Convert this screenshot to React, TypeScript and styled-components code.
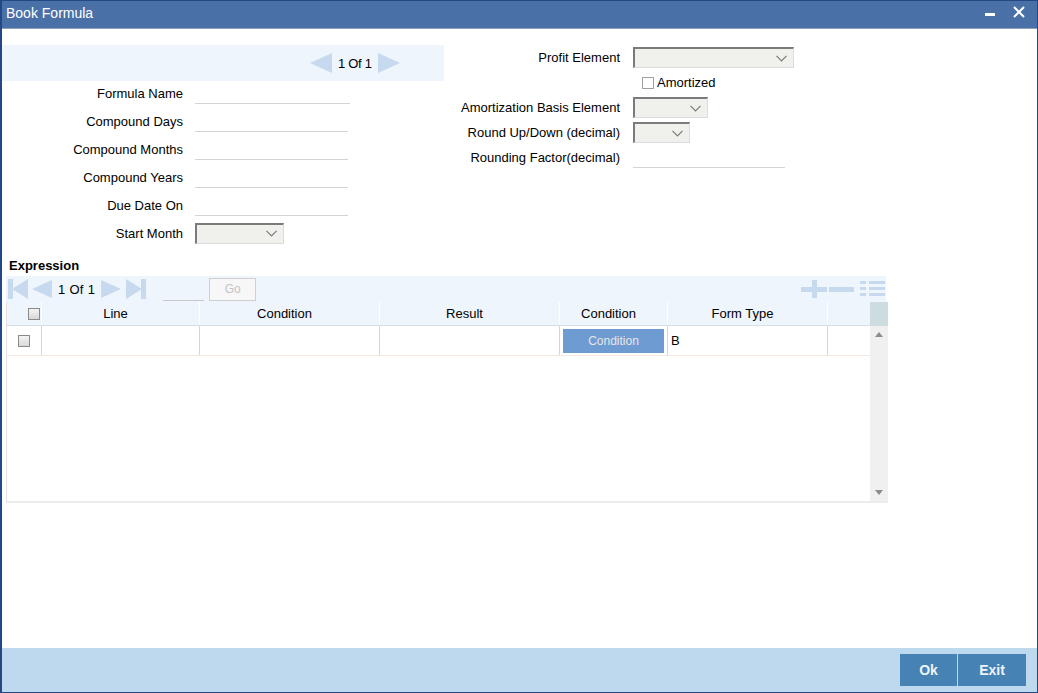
import React from "react";
import styled, { createGlobalStyle } from "styled-components";

const GlobalStyle = createGlobalStyle`
  html, body {
    margin: 0;
    padding: 0;
    overflow: hidden;
  }
  body {
    font-family: "Liberation Sans", Arial, sans-serif;
    font-size: 13px;
    color: #000;
  }
`;

const Window = styled.div`
  width: 1038px;
  height: 693px;
  box-sizing: border-box;
  border: 1px solid #234884;
  border-left-width: 2px;
  display: flex;
  flex-direction: column;
  background: #fff;
`;

const TitleBar = styled.div`
  height: 27px;
  flex: none;
  background: #4a70a8;
  border-bottom: 1px solid #8fa3b8;
  display: flex;
  align-items: center;
  padding: 0 12px 0 4px;
  color: #fff;
  font-size: 14px;
`;

const Title = styled.div`
  flex: 1;
  margin-top: -3px;
`;

const WinButtons = styled.div`
  display: flex;
  align-items: center;
  gap: 18px;
  margin-top: -6px;
`;

const Body = styled.div`
  flex: 1;
  padding-top: 16px;
  display: flex;
  flex-direction: column;
`;

const TopSection = styled.div`
  display: flex;
`;

const LeftCol = styled.div`
  width: 442px;
  display: flex;
  flex-direction: column;
`;

const RightCol = styled.div`
  display: flex;
  flex-direction: column;
`;

const NavBand = styled.div`
  height: 36px;
  background: #eef5fd;
  display: flex;
  align-items: center;
  padding-left: 308px;
  gap: 6px;
`;

const NavText = styled.span`
  font-size: 13px;
  letter-spacing: -0.3px;
`;

const FieldList = styled.div`
  margin-top: -2px;
`;

const FieldRow = styled.div<{ $h: number }>`
  height: ${(p) => p.$h}px;
  display: flex;
  align-items: center;
`;

const Label = styled.label<{ $w: number; $gap: number }>`
  width: ${(p) => p.$w}px;
  margin-right: ${(p) => p.$gap}px;
  text-align: right;
  white-space: nowrap;
`;

const LineInput = styled.input<{ $w: number }>`
  width: ${(p) => p.$w}px;
  height: 22px;
  box-sizing: border-box;
  border: none;
  border-bottom: 1px solid #d4d4d4;
  background: transparent;
  outline: none;
  padding: 0 4px;
  font: inherit;
`;

const SelectBox = styled.div<{ $w: number }>`
  width: ${(p) => p.$w}px;
  height: 21px;
  box-sizing: border-box;
  border-top: 2px solid #7b7b7b;
  border-left: 2px solid #7b7b7b;
  border-right: 1px solid #dcdcdc;
  border-bottom: 1px solid #dcdcdc;
  background: #f0f0ed;
  display: flex;
  align-items: center;
  justify-content: flex-end;
  padding-right: 6px;
`;

const CheckRow = styled.div`
  display: flex;
  align-items: center;
  margin-left: 198px;
  gap: 3px;
`;

const Check = styled.span<{ $grey?: boolean }>`
  width: 12px;
  height: 12px;
  box-sizing: border-box;
  display: inline-block;
  border: 1px solid ${(p) => (p.$grey ? "#8a8a8a" : "#a0a0a0")};
  background: ${(p) =>
    p.$grey ? "linear-gradient(#f4f4f4, #d8d8d8)" : "#fff"};
`;

const SectionTitle = styled.div`
  font-weight: bold;
  line-height: 16px;
  margin: 11px 0 2px 7px;
`;

const Expression = styled.div`
  margin-left: 4px;
  width: 882px;
`;

const Toolbar = styled.div`
  width: 880px;
  height: 26px;
  background: #eef5fd;
  display: flex;
  align-items: center;
  padding-left: 2px;
  box-sizing: border-box;
`;

const Spacer = styled.span<{ $w: number }>`
  width: ${(p) => p.$w}px;
  flex: none;
`;

const PageText = styled.span`
  margin: 0 6px;
  letter-spacing: 0.3px;
`;

const PageInput = styled.div`
  width: 41px;
  height: 22px;
  margin-left: 17px;
  border-bottom: 1px solid #c8c8c8;
`;

const GoButton = styled.div`
  width: 47px;
  height: 23px;
  margin-left: 5px;
  box-sizing: border-box;
  border: 1px solid #cfcfcf;
  background: #f7f7f7;
  color: #c4c4c4;
  font-size: 12px;
  display: flex;
  align-items: center;
  justify-content: center;
`;

const ToolIcons = styled.div`
  margin-left: auto;
  display: flex;
  align-items: center;
  gap: 2px;
  padding-right: 1px;
`;

const TableFrame = styled.div`
  display: flex;
  height: 201px;
  border-left: 1px solid #e2e2e2;
  border-bottom: 2px solid #ececec;
  box-sizing: border-box;
`;

const TableMain = styled.div`
  width: 863px;
  display: flex;
  flex-direction: column;
`;

const cols = "34px 158px 180px 180px 108px 160px 43px";

const HeadRow = styled.div`
  display: grid;
  grid-template-columns: ${cols};
  height: 24px;
  background: #eef5fd;
  border-bottom: 1px solid #d5dde6;
  box-sizing: border-box;
`;

const HeadCell = styled.div`
  display: flex;
  align-items: center;
  justify-content: center;
  padding-right: 10px;
  border-left: 1px solid #fff;
  &:first-child {
    border-left: none;
    padding-right: 0;
  }
`;

const DataRow = styled.div`
  display: grid;
  grid-template-columns: ${cols};
  height: 30px;
  border-bottom: 1px solid #f4e9e2;
  box-sizing: border-box;
`;

const DataCell = styled.div<{ $align?: string }>`
  display: flex;
  align-items: center;
  justify-content: ${(p) => p.$align || "flex-start"};
  border-left: 1px solid #d2d6dc;
  padding: 0 3px;
  &:first-child {
    border-left: none;
  }
`;

const CondButton = styled.div`
  flex: 1;
  height: 24px;
  background: #6f9bd3;
  color: #e6e6e6;
  font-size: 12px;
  display: flex;
  align-items: center;
  justify-content: center;
`;

const ScrollCol = styled.div`
  width: 18px;
  display: flex;
  flex-direction: column;
`;

const ScrollHead = styled.div`
  height: 24px;
  background: #cddcdf;
`;

const ScrollTrack = styled.div`
  flex: 1;
  background: #f0f0f0;
  display: flex;
  flex-direction: column;
  align-items: center;
  justify-content: space-between;
  padding: 6px 0 6px;
`;

const Footer = styled.div`
  height: 44px;
  flex: none;
  background: #bed9ed;
  display: flex;
  justify-content: flex-end;
  align-items: center;
  padding-right: 11px;
  gap: 1px;
`;

const FooterButton = styled.button<{ $w: number }>`
  width: ${(p) => p.$w}px;
  height: 32px;
  border: none;
  margin: 0;
  background: #4682b4;
  color: #eef4fa;
  font-family: "Liberation Sans", Arial, sans-serif;
  font-weight: bold;
  font-size: 14px;
  padding: 0;
`;

const Chevron = () => (
  <svg width="11" height="7" viewBox="0 0 11 7">
    <path d="M0.5 0.8 L5.5 5.8 L10.5 0.8" fill="none" stroke="#7a7a7a" strokeWidth="1.2" />
  </svg>
);

const Select = ({ w }: { w: number }) => (
  <SelectBox $w={w}>
    <Chevron />
  </SelectBox>
);

const NAV = "#c6d9ef";

const ArrowLeft = ({ size = 22 }: { size?: number }) => (
  <svg width={size} height={size - 2} viewBox="0 0 22 20">
    <path d="M0 10 L22 0 L22 20 Z" fill={NAV} />
  </svg>
);

const ArrowRight = ({ size = 22 }: { size?: number }) => (
  <svg width={size} height={size - 2} viewBox="0 0 22 20">
    <path d="M0 0 L22 10 L0 20 Z" fill={NAV} />
  </svg>
);

const FirstIcon = () => (
  <svg width="20" height="20" viewBox="0 0 20 20">
    <rect x="0" y="0" width="5" height="20" fill={NAV} />
    <path d="M4 10 L20 0 L20 20 Z" fill={NAV} />
  </svg>
);

const LastIcon = () => (
  <svg width="20" height="20" viewBox="0 0 20 20">
    <path d="M0 0 L16 10 L0 20 Z" fill={NAV} />
    <rect x="15" y="0" width="5" height="20" fill={NAV} />
  </svg>
);

const PlusIcon = () => (
  <svg width="26" height="18" viewBox="0 0 26 18">
    <rect x="0" y="7" width="26" height="5" fill={NAV} />
    <rect x="11" y="0" width="5" height="18" fill={NAV} />
  </svg>
);

const MinusIcon = () => (
  <svg width="25" height="18" viewBox="0 0 25 18">
    <rect x="0" y="7" width="25" height="5" fill={NAV} />
  </svg>
);

const ListIcon = () => (
  <svg width="25" height="18" viewBox="0 0 25 18">
    {[1, 7, 13].map((y) => (
      <g key={y}>
        <rect x="0" y={y} width="6" height="3" fill={NAV} />
        <rect x="9" y={y} width="16" height="3" fill={NAV} />
      </g>
    ))}
  </svg>
);

const ScrollArrow = ({ up }: { up?: boolean }) => (
  <svg width="8" height="5" viewBox="0 0 8 5">
    <path d={up ? "M0 5 L4 0 L8 5 Z" : "M0 0 L8 0 L4 5 Z"} fill="#8c8c8c" />
  </svg>
);

const leftFields = [
  { label: "Formula Name", w: 155 },
  { label: "Compound Days", w: 153 },
  { label: "Compound Months", w: 153 },
  { label: "Compound Years", w: 153 },
  { label: "Due Date On", w: 153 },
];

const App = () => (
  <>
    <GlobalStyle />
    <Window>
      <TitleBar>
        <Title>Book Formula</Title>
        <WinButtons>
          <svg width="10" height="10" viewBox="0 0 10 10">
            <rect x="0" y="6" width="10" height="3" fill="#fff" />
          </svg>
          <svg width="12" height="12" viewBox="0 0 12 12">
            <path d="M1 1 L11 11 M11 1 L1 11" stroke="#fff" strokeWidth="2" />
          </svg>
        </WinButtons>
      </TitleBar>
      <Body>
        <TopSection>
          <LeftCol>
            <NavBand>
              <ArrowLeft />
              <NavText>1 Of 1</NavText>
              <ArrowRight />
            </NavBand>
            <FieldList>
              {leftFields.map((f) => (
                <FieldRow $h={28} key={f.label}>
                  <Label $w={181} $gap={12}>
                    {f.label}
                  </Label>
                  <LineInput $w={f.w} />
                </FieldRow>
              ))}
              <FieldRow $h={28}>
                <Label $w={181} $gap={12}>
                  Start Month
                </Label>
                <Select w={89} />
              </FieldRow>
            </FieldList>
          </LeftCol>
          <RightCol>
            <FieldRow $h={25}>
              <Label $w={176} $gap={13}>
                Profit Element
              </Label>
              <Select w={161} />
            </FieldRow>
            <FieldRow $h={25}>
              <CheckRow>
                <Check />
                <span>Amortized</span>
              </CheckRow>
            </FieldRow>
            <FieldRow $h={25}>
              <Label $w={176} $gap={13}>
                Amortization Basis Element
              </Label>
              <Select w={75} />
            </FieldRow>
            <FieldRow $h={25}>
              <Label $w={176} $gap={13}>
                Round Up/Down (decimal)
              </Label>
              <Select w={57} />
            </FieldRow>
            <FieldRow $h={24}>
              <Label $w={176} $gap={13}>
                Rounding Factor(decimal)
              </Label>
              <LineInput $w={152} />
            </FieldRow>
          </RightCol>
        </TopSection>
        <SectionTitle>Expression</SectionTitle>
        <Expression>
          <Toolbar>
            <FirstIcon />
            <Spacer $w={4} />
            <ArrowLeft size={20} />
            <PageText>1 Of 1</PageText>
            <ArrowRight size={20} />
            <Spacer $w={5} />
            <LastIcon />
            <PageInput />
            <GoButton>Go</GoButton>
            <ToolIcons>
              <PlusIcon />
              <MinusIcon />
              <Spacer $w={2} />
              <ListIcon />
            </ToolIcons>
          </Toolbar>
          <TableFrame>
            <TableMain>
              <HeadRow>
                <HeadCell>
                  <Spacer $w={20} />
                  <Check $grey />
                </HeadCell>
                <HeadCell>Line</HeadCell>
                <HeadCell>Condition</HeadCell>
                <HeadCell>Result</HeadCell>
                <HeadCell>Condition</HeadCell>
                <HeadCell>Form Type</HeadCell>
                <HeadCell />
              </HeadRow>
              <DataRow>
                <DataCell $align="center">
                  <Check $grey />
                </DataCell>
                <DataCell />
                <DataCell />
                <DataCell />
                <DataCell>
                  <CondButton>Condition</CondButton>
                </DataCell>
                <DataCell>B</DataCell>
                <DataCell />
              </DataRow>
            </TableMain>
            <ScrollCol>
              <ScrollHead />
              <ScrollTrack>
                <ScrollArrow up />
                <ScrollArrow />
              </ScrollTrack>
            </ScrollCol>
          </TableFrame>
        </Expression>
      </Body>
      <Footer>
        <FooterButton $w={57}>Ok</FooterButton>
        <FooterButton $w={68}>Exit</FooterButton>
      </Footer>
    </Window>
  </>
);

export default App;
